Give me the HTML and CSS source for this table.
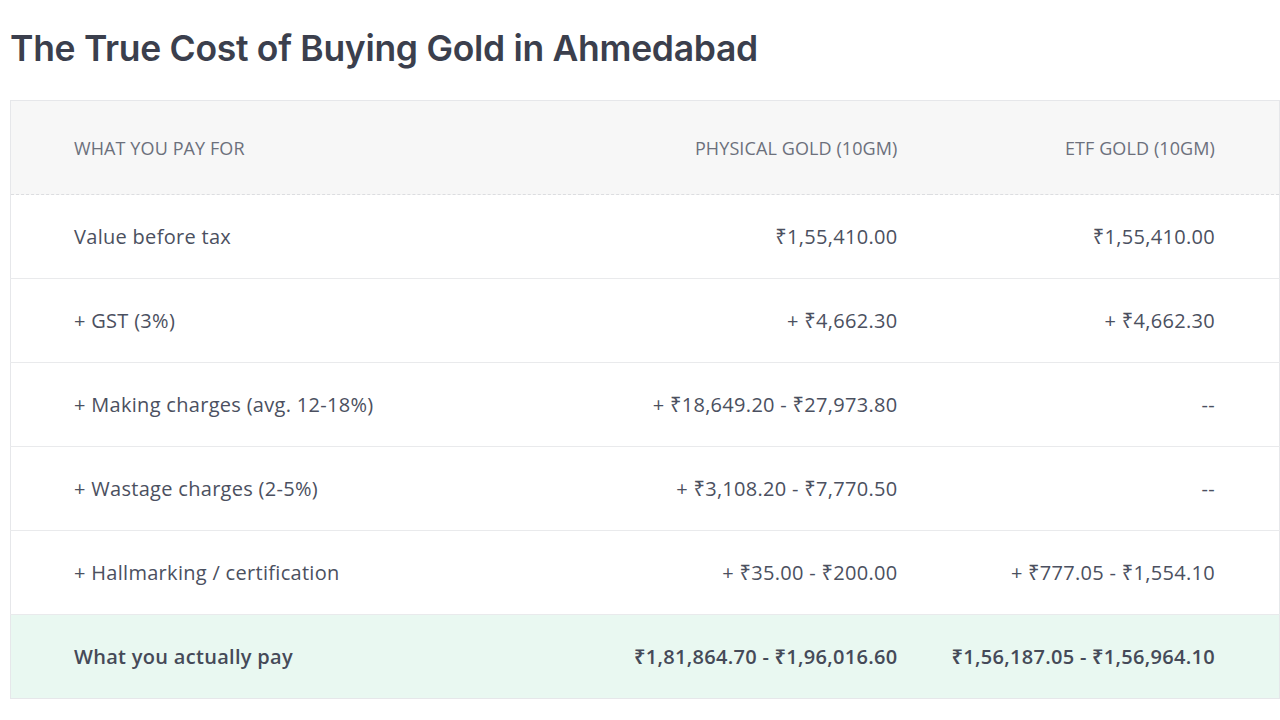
FILE: index.html
```html
<!DOCTYPE html>
<html lang="en">
<head>
<meta charset="utf-8">
<title>The True Cost of Buying Gold in Ahmedabad</title>
<link rel="stylesheet" href="styles.css">
</head>
<body>
<h1 class="title">The True Cost of Buying Gold in Ahmedabad</h1>
<table class="cost-table">
  <colgroup>
    <col class="col-label">
    <col class="col-phys">
    <col class="col-etf">
  </colgroup>
  <thead>
    <tr>
      <th class="label">What you pay for</th>
      <th class="phys">Physical Gold (10gm)</th>
      <th class="etf">ETF Gold (10gm)</th>
    </tr>
  </thead>
  <tbody>
    <tr>
      <td class="label">Value before tax</td>
      <td class="phys">₹1,55,410.00</td>
      <td class="etf">₹1,55,410.00</td>
    </tr>
    <tr>
      <td class="label">+ GST (3%)</td>
      <td class="phys">+ ₹4,662.30</td>
      <td class="etf">+ ₹4,662.30</td>
    </tr>
    <tr>
      <td class="label">+ Making charges (avg. 12-18%)</td>
      <td class="phys">+ ₹18,649.20 - ₹27,973.80</td>
      <td class="etf">--</td>
    </tr>
    <tr>
      <td class="label">+ Wastage charges (2-5%)</td>
      <td class="phys">+ ₹3,108.20 - ₹7,770.50</td>
      <td class="etf">--</td>
    </tr>
    <tr>
      <td class="label">+ Hallmarking / certification</td>
      <td class="phys">+ ₹35.00 - ₹200.00</td>
      <td class="etf">+ ₹777.05 - ₹1,554.10</td>
    </tr>
    <tr class="total">
      <td class="label">What you actually pay</td>
      <td class="phys">₹1,81,864.70 - ₹1,96,016.60</td>
      <td class="etf">₹1,56,187.05 - ₹1,56,964.10</td>
    </tr>
  </tbody>
</table>
</body>
</html>
```
FILE: styles.css
```css
html, body {
  margin: 0;
  padding: 0;
  background: #ffffff;
}
body {
  padding: 0 0 0 10px;
  font-family: "Open Sans", "Noto Sans", Arial, sans-serif;
  color: #4b5060;
}
.title {
  margin: 0 0 27px 0;
  padding: 27px 0 0 0;
  height: 73px;
  box-sizing: border-box;
  font-family: Inter, "Noto Sans", sans-serif;
  font-weight: 600;
  font-size: 35.5px;
  line-height: 44px;
  color: #3b3f4d;
  letter-spacing: -0.3px;
}
.cost-table {
  width: 1269px;
  table-layout: fixed;
  border-collapse: collapse;
  border: 1px solid #e6e7ea;
  font-size: 20px;
  letter-spacing: 0.3px;
}
.col-label { width: 570px; }
.col-phys { width: 349px; }
.col-etf { width: 350px; }
.cost-table th,
.cost-table td {
  white-space: nowrap;
  font-weight: 400;
  text-align: right;
}
.cost-table .label {
  text-align: left;
  padding: 0 16px 0 63px;
}
.cost-table .phys {
  padding: 0 32px 0 16px;
}
.cost-table .etf {
  padding: 0 64px 0 16px;
}
.cost-table thead tr {
  background: #f7f7f7;
  height: 94px;
  border-bottom: 1px dashed #dcdde0;
}
.cost-table th {
  text-transform: uppercase;
  font-size: 18px;
  font-weight: 400;
  letter-spacing: 0.1px;
  color: #6c707c;
}
.cost-table tbody tr {
  height: 84px;
  border-bottom: 1px solid #e9eaec;
}
.cost-table tbody tr.total {
  background: #e9f8f1;
  border-bottom: none;
}
.cost-table tr.total td {
  font-weight: 600;
  letter-spacing: 0.3px;
  color: #454a58;
}
```
